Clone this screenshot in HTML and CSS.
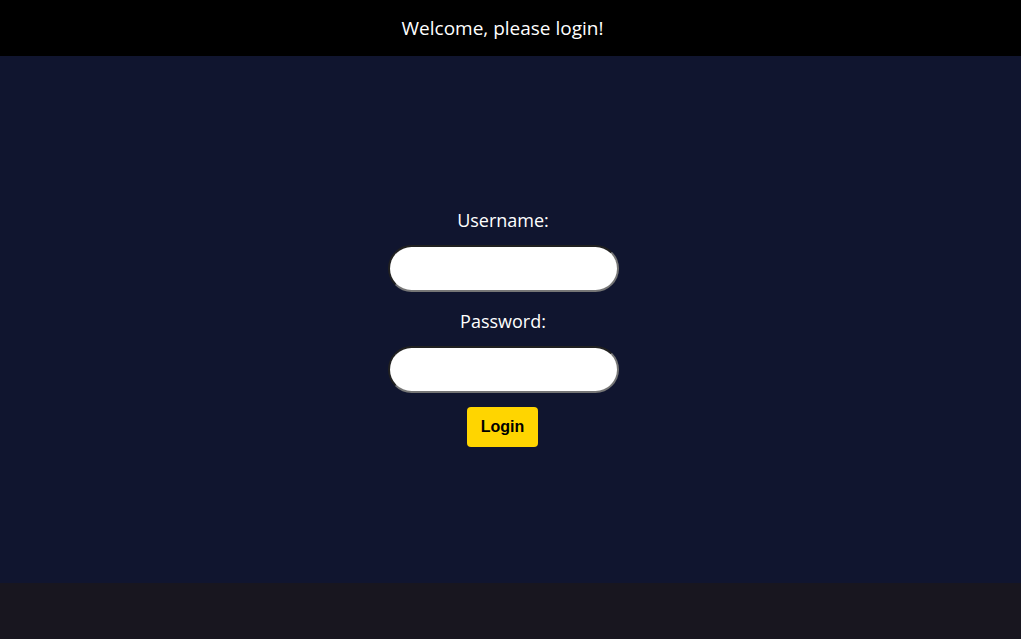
FILE: index.html
```html
<!DOCTYPE html>
<html>
<head>
<meta charset="utf-8">
<link rel="stylesheet" href="styles.css">
</head>
<body>
<header class="top">Welcome, please login!</header>
<main class="main">
  <form class="form">
    <label class="label" for="u">Username:</label>
    <input class="field" id="u" type="text">
    <label class="label second" for="p">Password:</label>
    <input class="field" id="p" type="password">
    <button class="btn" type="button">Login</button>
  </form>
</main>
<footer class="foot"></footer>
</body>
</html>
```
FILE: styles.css
```css
html, body { margin: 0; padding: 0; }
body {
  font-family: "Open Sans", "Noto Sans", sans-serif;
  background: #18161f;
  color: #fff;
}
.top {
  height: 56px;
  background: #000;
  display: flex;
  align-items: center;
  justify-content: center;
  font-size: 19px;
  padding-right: 16px;
  box-sizing: border-box;
}
.main {
  height: 527px;
  background: #10152f;
  box-sizing: border-box;
  padding-top: 152px;
  padding-right: 15px;
}
.form {
  margin: 0;
  display: flex;
  flex-direction: column;
  align-items: center;
}
.label {
  font-size: 18px;
  line-height: 24px;
  height: 24px;
  margin-bottom: 13px;
}
.label.second { margin-top: 17px; }
.field {
  width: 231px;
  height: 47px;
  box-sizing: border-box;
  border-radius: 24px;
  border: 2px inset #767676;
  background: #fff;
  margin: 0;
  padding: 0 16px;
  font-size: 16px;
}
.btn {
  margin-top: 14px;
  margin-right: 1px;
  width: 71px;
  height: 40px;
  background: #ffd500;
  border: none;
  border-radius: 4px;
  font-family: "Liberation Sans", Arial, sans-serif;
  font-weight: bold;
  font-size: 16px;
  color: #000;
  padding: 0;
}
.foot { height: 56px; background: #18161f; }
```
